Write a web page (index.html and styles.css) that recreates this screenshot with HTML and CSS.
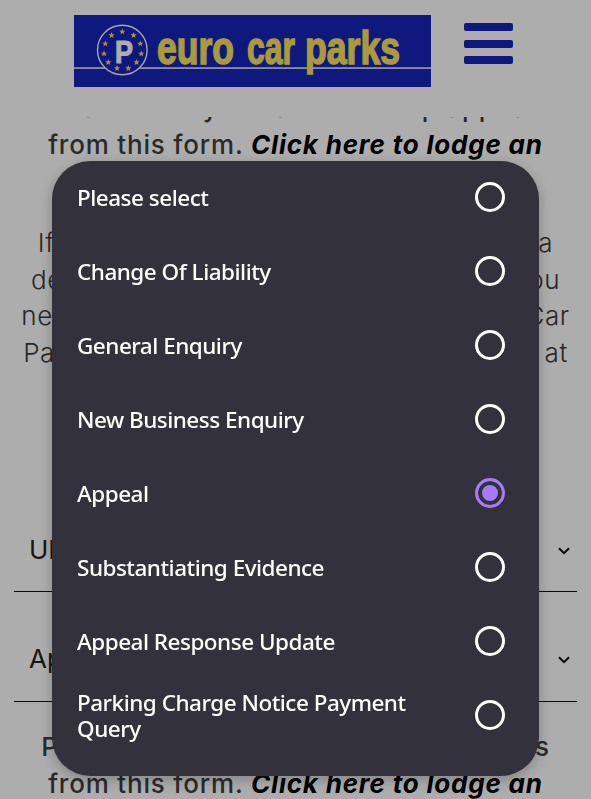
FILE: index.html
```html
<!DOCTYPE html>
<html lang="en">
<head>
  <meta charset="UTF-8" />
  <title>Contact Euro Car Parks</title>
  <link rel="stylesheet" href="styles.css">
</head>
<body>

  <div class="page">
    <header class="site-header">
      <svg class="logo" viewBox="0 0 357 72" role="img" aria-label="euro car parks">
        <defs>
          <polygon id="star" points="0,-3.2 0.9,-1 3.1,-1 1.4,0.4 1.9,2.6 0,1.4 -1.9,2.6 -1.4,0.4 -3.1,-1 -0.9,-1" />
        </defs>
        <rect width="357" height="72" fill="#1725b8" />
        <rect y="52.3" width="357" height="1.5" fill="#f4f4fc" />
        <circle cx="48.3" cy="35" r="24.8" fill="#1725b8" stroke="#f4f4fc" stroke-width="1.4" />
        <g fill="#fcd860" transform="translate(48.3 35)">
          <use href="#star" transform="translate(0 -18.3)" />
          <use href="#star" transform="translate(11.3 -14.7)" />
          <use href="#star" transform="translate(18 -6.3)" />
          <use href="#star" transform="translate(19 3.7)" />
          <use href="#star" transform="translate(14.3 12.3)" />
          <use href="#star" transform="translate(6 18.3)" />
          <use href="#star" transform="translate(-5.3 18.3)" />
          <use href="#star" transform="translate(-14 12.3)" />
          <use href="#star" transform="translate(-18.3 3.7)" />
          <use href="#star" transform="translate(-17 -6.3)" />
          <use href="#star" transform="translate(-10.7 -14.7)" />
        </g>
        <text class="logo-p" x="41" y="48" textLength="18" lengthAdjust="spacingAndGlyphs">P</text>
        <text class="logo-name" x="83" y="49" textLength="77" lengthAdjust="spacingAndGlyphs">euro</text>
        <text class="logo-name" x="173" y="49" textLength="48" lengthAdjust="spacingAndGlyphs">car</text>
        <text class="logo-name" x="231" y="49" textLength="95" lengthAdjust="spacingAndGlyphs">parks</text>
      </svg>
      <div class="menu-btn">
        <span></span>
        <span></span>
        <span></span>
      </div>
    </header>

    <main class="content">
      <div class="scrolled">
        <p class="lead">Please note you cannot set up appeals<br>from this form. <a class="lead-link">Click here to lodge an</a></p>

        <p class="info">If you wish to submit an appeal against a<br>decision, we'll need some details that you<br>need to provide us alongside your Euro Car<br>Parking Charge Notice reference, shown at</p>

        <div class="select-row first">
          <span>UNITED KINGDOM</span>
          <svg class="chevron" viewBox="0 0 12 8"><path d="M1 1.2l5 5 5-5" /></svg>
        </div>
        <div class="select-row">
          <span>Appeal</span>
          <svg class="chevron" viewBox="0 0 12 8"><path d="M1 1.2l5 5 5-5" /></svg>
        </div>

        <p class="lead bottom">Please note you cannot set up appeals<br>from this form. <a class="lead-link">Click here to lodge an</a></p>
      </div>
    </main>
  </div>

  <!-- Select dialog -->
  <div class="overlay">
    <div class="dialog">
      <div class="option"><span>Please select</span><i class="radio"></i></div>
      <div class="option"><span>Change Of Liability</span><i class="radio"></i></div>
      <div class="option"><span>General Enquiry</span><i class="radio"></i></div>
      <div class="option"><span>New Business Enquiry</span><i class="radio"></i></div>
      <div class="option"><span>Appeal</span><i class="radio checked"></i></div>
      <div class="option"><span>Substantiating Evidence</span><i class="radio"></i></div>
      <div class="option"><span>Appeal Response Update</span><i class="radio"></i></div>
      <div class="option"><span>Parking Charge Notice Payment Query</span><i class="radio"></i></div>
    </div>
  </div>

</body>
</html>
```

FILE: styles.css
```css
* {
  box-sizing: border-box;
}

html,
body {
  margin: 0;
  height: 100%;
  overflow: hidden;
}

body {
  font-family: Inter, sans-serif;
  background: #ffffff;
}

.page {
  height: 799px;
  display: flex;
  flex-direction: column;
}

.site-header {
  flex: 0 0 117px;
  padding: 15px 78px 0 74px;
  display: flex;
  justify-content: space-between;
  align-items: flex-start;
}

.logo {
  width: 357px;
  height: 72px;
}

.logo-p {
  font-family: "Liberation Sans", sans-serif;
  font-weight: 700;
  font-size: 32px;
  fill: #ffffff;
  stroke: #ffffff;
  stroke-width: 1px;
}

.logo-name {
  font-family: "Liberation Sans", sans-serif;
  font-weight: 700;
  font-size: 47px;
  fill: #fce25a;
  stroke: #fce25a;
  stroke-width: 1.5px;
}

.menu-btn {
  width: 49px;
  margin-top: 8px;
  display: flex;
  flex-direction: column;
  gap: 8.5px;
}

.menu-btn span {
  height: 8px;
  border-radius: 2px;
  background: #1725b8;
}

.content {
  flex: 1;
  overflow: hidden;
}

.scrolled {
  margin-top: -29px;
}

.lead {
  margin: 0;
  padding-top: 1px;
  font-size: 26px;
  font-weight: 500;
  letter-spacing: 0.8px;
  line-height: 37px;
  color: #3f3f3f;
  text-align: center;
  white-space: nowrap;
}

.lead-link {
  font-weight: 700;
  font-style: italic;
  color: #000000;
}

.info {
  margin: 62px 0 0;
  font-size: 26px;
  font-weight: 300;
  letter-spacing: 0.6px;
  line-height: 36.6px;
  color: #3a3a3a;
  text-align: center;
  white-space: nowrap;
}

.select-row {
  margin: 0 14px;
  padding: 52px 7px 0 15px;
  height: 109.5px;
  display: flex;
  justify-content: space-between;
  border-bottom: 1px solid #111111;
  font-size: 26px;
  color: #222222;
}

.select-row.first {
  margin-top: 162px;
  height: 59px;
  padding-top: 2px;
}

.select-row span {
  line-height: 30px;
}

.chevron {
  width: 12px;
  height: 8px;
  margin-top: 12px;
  fill: none;
  stroke: #111111;
  stroke-width: 2;
}

.bottom {
  margin-top: 25.5px;
}

/* DIALOG */
.overlay {
  position: fixed;
  left: 0;
  top: 0;
  width: 100vw;
  height: 100vh;
  background: rgba(0, 0, 0, 0.32);
}

.dialog {
  position: absolute;
  left: 52px;
  top: 161px;
  width: 487px;
  height: 615px;
  padding: 0 34px 24px 25px;
  background: #33313c;
  border-radius: 38px;
  box-shadow: 0 4px 14px rgba(0, 0, 0, 0.25);
  font-family: "Noto Sans", sans-serif;
  font-weight: 500;
  font-size: 22.5px;
  letter-spacing: -0.5px;
  line-height: 26px;
  color: #ffffff;
}

.option {
  height: 74px;
  display: flex;
  justify-content: space-between;
  align-items: center;
}

.option span {
  max-width: 345px;
}

.radio {
  flex: none;
  width: 30px;
  height: 30px;
  margin-bottom: 2px;
  border: 3px solid #ffffff;
  border-radius: 50%;
}

.radio.checked {
  border-color: #a67cf5;
  background: #a67cf5;
  box-shadow: inset 0 0 0 4px #33313c;
}
```
